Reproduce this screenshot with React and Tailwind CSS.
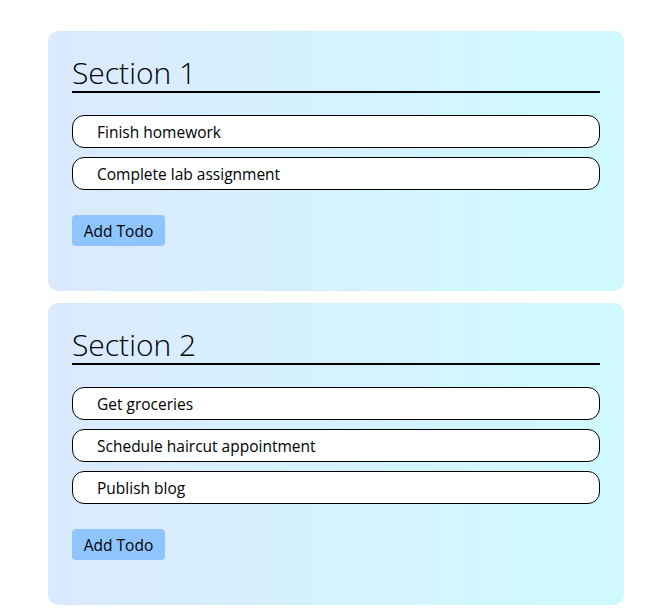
const sections = [
  { title: 'Section 1', todos: ['Finish homework', 'Complete lab assignment'] },
  { title: 'Section 2', todos: ['Get groceries', 'Schedule haircut appointment', 'Publish blog'] },
];

function Section({ title, todos }) {
  return (
    <div className="rounded-[10px] bg-gradient-to-r from-blue-100 to-cyan-100 px-6 pt-6 pb-[45px]">
      <h2 className="text-[30px] leading-[36px] font-light text-black border-b-2 border-black">{title}</h2>
      <div className="mt-[22px] flex flex-col gap-[9px]">
        {todos.map((t) => (
          <div key={t} className="h-[33px] flex items-center rounded-xl border border-black bg-white pl-6 pt-[2px] text-[15.5px] text-black">
            {t}
          </div>
        ))}
      </div>
      <button className="mt-[25px] h-[31px] w-[93px] rounded bg-blue-300 pt-[2px] text-[15.5px] text-black">Add Todo</button>
    </div>
  );
}

export default function App() {
  return (
    <div className="min-h-screen bg-white" style={{ fontFamily: '"Open Sans", "Noto Sans", sans-serif' }}>
      <div className="mx-auto max-w-xl pt-[31px] flex flex-col gap-3">
        {sections.map((s) => (
          <Section key={s.title} {...s} />
        ))}
      </div>
    </div>
  );
}
